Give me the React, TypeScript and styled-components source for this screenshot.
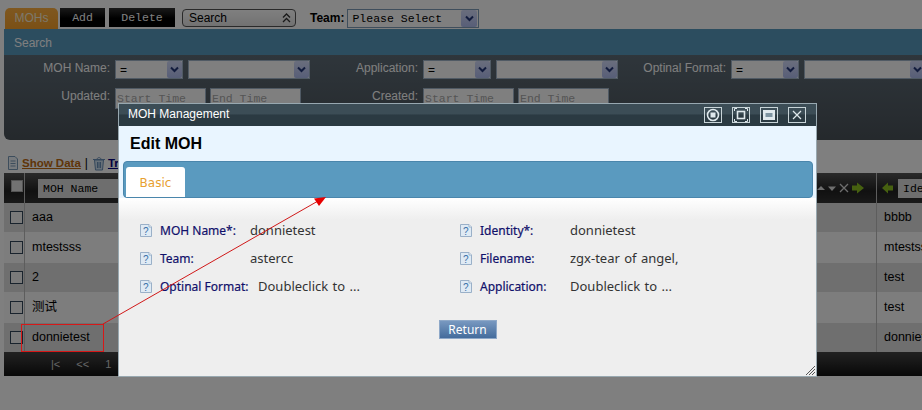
import React from "react";
import styled, { createGlobalStyle } from "styled-components";

const GlobalStyle = createGlobalStyle`
  html, body {
    margin: 0;
    padding: 0;
    width: 922px;
    height: 410px;
    overflow: hidden;
    background: #fff;
    font-family: "Liberation Sans", Arial, "Noto Sans CJK SC", sans-serif;
    font-size: 12px;
  }
  * { box-sizing: border-box; }
`;

const Page = styled.div`
  position: relative;
  width: 922px;
  height: 410px;
  overflow: hidden;
`;
const Dimmer = styled.div`
  position: absolute;
  inset: 0;
  background: rgba(0, 0, 0, 0.5);
`;

/* top toolbar */
const Toolbar = styled.div`
  display: flex;
  align-items: flex-start;
  height: 29px;
  padding: 8px 0 0 5px;
`;
const MainTab = styled.div`
  width: 53px;
  height: 21px;
  margin-right: 2px;
  border-radius: 5px 5px 0 0;
  background: linear-gradient(#ffb040, #f5a02c);
  color: #f8f0d8;
  font-size: 12px;
  line-height: 21px;
  text-align: center;
`;
const BlackButton = styled.div<{ $w: number }>`
  width: ${(p) => p.$w}px;
  height: 19px;
  margin-right: 4px;
  background: linear-gradient(#333 0, #000 55%, #000);
  color: #fff;
  font: 11.5px/19px "Liberation Mono", monospace;
  text-align: center;
`;
const SearchPicker = styled.div`
  display: flex;
  align-items: center;
  justify-content: space-between;
  width: 114px;
  height: 18px;
  margin: 1px 0 0 3px;
  padding: 0 4px 0 6px;
  border: 1px solid #555;
  border-radius: 4px;
  background: linear-gradient(#fff, #e4e4e4);
  color: #000;
`;
const TeamLabel = styled.span`
  margin: 3px 3px 0 14px;
  font-weight: bold;
  color: #000;
`;
const TeamSelect = styled.div`
  display: flex;
  align-items: center;
  justify-content: space-between;
  width: 132px;
  height: 19px;
  margin-top: 1px;
  padding: 0 1px 0 4px;
  border: 1px solid #7f9db9;
  background: #fff;
  font: 11.5px "Liberation Mono", monospace;
`;
const ChevronBox = styled.span<{ $w?: number }>`
  display: flex;
  align-items: center;
  justify-content: center;
  width: ${(p) => p.$w ?? 15}px;
  height: 17px;
  border-radius: 2px;
  background: linear-gradient(#d4dcfa, #b0bdf0);
  color: #24387a;
`;

/* search panel */
const SearchPanel = styled.section`
  margin-left: 4px;
  height: 111px;
  border-radius: 0 0 0 6px;
  background: linear-gradient(#647480, #4a5259);
`;
const SearchHeader = styled.div`
  height: 26px;
  padding-left: 10px;
  background: #589abe;
  color: #fff;
  font-size: 12px;
  line-height: 28px;
`;
const SearchRows = styled.div`
  display: grid;
  grid-template-columns: repeat(3, 308px);
  grid-auto-rows: 28px;
  padding-top: 5px;
`;
const SearchField = styled.div`
  display: flex;
  align-items: flex-start;
  gap: 5px;
  width: 308px;
`;
const FieldLabel = styled.label`
  width: 106px;
  color: #fff;
  line-height: 16px;
  text-align: right;
`;
const FilterSelect = styled.div<{ $w: number }>`
  display: flex;
  align-items: center;
  justify-content: space-between;
  flex: none;
  width: ${(p) => p.$w}px;
  height: 19px;
  padding: 0 0 0 4px;
  border: 1px solid #a0b4c8;
  background: #fff;
  color: #000;
  font: 12px "Liberation Sans", sans-serif;
`;
const TimeInput = styled.div`
  flex: none;
  width: 91px;
  height: 21px;
  margin-right: -1px;
  padding: 3px 1px;
  border: 1px solid #a0b4c8;
  background: #fff;
  color: #aaa;
  font: 11.5px "Liberation Mono", monospace;
`;

/* data grid */
const GridActions = styled.div`
  display: flex;
  align-items: center;
  height: 18px;
  margin-top: 14px;
  margin-bottom: 1px;
  padding-left: 7px;
  font-size: 12px;
`;
const ActionLink = styled.a<{ $c: string }>`
  margin: 0 4px 0 3px;
  color: ${(p) => p.$c};
  font-size: 11.5px;
  font-weight: bold;
  text-decoration: underline;
`;
const TrashIcon = styled.svg`
  margin-left: 4px;
  margin-right: -1px;
`;
const Table = styled.div`
  margin-left: 4px;
`;
const HeadRow = styled.div`
  display: grid;
  grid-template-columns: 21px 852px 1fr;
  height: 30px;
  background: linear-gradient(#555, #222 60%, #333);
`;
const HeadCell = styled.div`
  display: flex;
  align-items: center;
  border-right: 1px solid #bbb;
  padding-left: 13px;
  &:first-child {
    padding-left: 7px;
  }
  &:last-child {
    border-right: 0;
    padding-left: 5px;
    gap: 4px;
  }
`;
const HeadCheck = styled.span`
  width: 12px;
  height: 12px;
  margin-top: -4px;
  background: #e4e4e4;
  border: 1px solid #aaa;
`;
const HeadInput = styled.div`
  width: 130px;
  height: 19px;
  padding-left: 5px;
  background: #ddd;
  color: #000;
  font: 11.5px/19px "Liberation Mono", monospace;
  white-space: nowrap;
  overflow: hidden;
`;
const SortTools = styled.div`
  display: flex;
  align-items: center;
  margin-left: auto;
  margin-right: 11px;
`;
const DataRow = styled.div`
  display: grid;
  grid-template-columns: 21px 852px 1fr;
  height: 29px;
  background: #dedede;
  color: #000;
  font-size: 12.5px;
  line-height: 29px;
  &:nth-child(odd) {
    height: 31px;
    line-height: 31px;
    background: #fafafa;
  }
`;
const DataCell = styled.div`
  padding-left: 7px;
  border-right: 1px solid #bbb;
  overflow: hidden;
  white-space: nowrap;
  &:first-child {
    display: flex;
    align-items: center;
    padding-left: 6px;
  }
  &:last-child {
    border-right: 0;
  }
`;
const RowCheck = styled.span`
  width: 13px;
  height: 13px;
  border: 1px solid #32465a;
  background: #f4f4f4;
`;
const Pager = styled.div`
  display: flex;
  align-items: center;
  gap: 16px;
  height: 24px;
  padding-left: 47px;
  background: linear-gradient(#444, #111);
  color: #ccc;
  font: 11px "Liberation Sans", sans-serif;
`;

/* modal */
const Modal = styled.div`
  position: absolute;
  left: 118px;
  top: 103px;
  display: flex;
  flex-direction: column;
  width: 699px;
  height: 274px;
  border: 1px solid #98a8b0;
  background: #eee;
`;
const TitleBar = styled.div`
  display: flex;
  align-items: center;
  height: 22px;
  padding: 0 10px 0 9px;
  background: linear-gradient(#3c4d56 0, #3c4d56 45%, #2b3a42 50%, #2b3a42);
  color: #fff;
  font-size: 12px;
`;
const TitleText = styled.span`
  flex: 1;
  margin-top: -3px;
`;
const TitleButtons = styled.div`
  display: flex;
  gap: 10px;
`;
const TitleButton = styled.span`
  display: flex;
  align-items: center;
  justify-content: center;
  width: 18px;
  height: 16px;
  border: 1px solid #c8d4d8;
  color: #dfe8ec;
`;
const ModalHead = styled.h2`
  height: 35px;
  margin: 0;
  padding-left: 11px;
  background: #e9f5ff;
  color: #000;
  font-size: 16px;
  font-weight: bold;
  line-height: 35px;
`;
const TabWrap = styled.div`
  background: #e9f5ff;
`;
const TabStrip = styled.div`
  display: flex;
  align-items: flex-end;
  height: 37px;
  margin: 0 3px 0 4px;
  padding-left: 2px;
  border: 1px solid #4a86ac;
  border-radius: 4px;
  background: #5a9abf;
`;
const TabPill = styled.div`
  width: 59px;
  height: 30px;
  border-radius: 3px 3px 0 0;
  background: #fff;
  color: #e8a030;
  font: 12px/32px "DejaVu Sans", sans-serif;
  text-align: center;
`;
const ModalBody = styled.div`
  position: relative;
  flex: 1;
  padding: 18px 0 0 21px;
  background: linear-gradient(#fff 0, #eee 22px);
`;
const DetailGrid = styled.div`
  display: grid;
  grid-template-columns: 320px 1fr;
  grid-auto-rows: 28px;
`;
const Detail = styled.div`
  display: flex;
  align-items: center;
  height: 28px;
`;
const DetailLabel = styled.span<{ $w: number }>`
  width: ${(p) => p.$w}px;
  margin-left: 8px;
  color: #10106a;
  font: 12px "Noto Sans", sans-serif;
  -webkit-text-stroke: 0.2px #10106a;
  white-space: nowrap;
`;
const DetailValue = styled.span`
  color: #333;
  font: 13px "Noto Sans", sans-serif;
  word-spacing: 1px;
  white-space: nowrap;
`;
const ModalFooter = styled.div`
  display: flex;
  justify-content: center;
  margin-top: 20px;
  padding-right: 21px;
`;
const ReturnButton = styled.div`
  width: 58px;
  height: 19px;
  border: 1px solid #8ea8c8;
  background: linear-gradient(#7898c0, #446c9c);
  color: #fff;
  font: 12px/18px "Noto Sans", sans-serif;
  text-align: center;
`;
const Grip = styled.svg`
  position: absolute;
  right: 1px;
  bottom: 1px;
`;

/* red callout drawn on the screenshot */
const CalloutBox = styled.div`
  position: absolute;
  left: 21px;
  top: 324px;
  width: 83px;
  height: 28px;
  border: 1px solid #d81818;
`;
const Annotation = styled.svg`
  position: absolute;
  left: 0;
  top: 0;
`;

function Chevron() {
  return (
    <svg width="9" height="7" viewBox="0 0 9 7">
      <path d="M1 1.5 4.5 5 8 1.5" fill="none" stroke="currentColor" strokeWidth="2" />
    </svg>
  );
}

function HelpIcon() {
  return (
    <svg width="12" height="13" viewBox="0 0 12 13">
      <path d="M.5.5H9L11.5 3V12.5H.5Z" fill="#dfeaf4" stroke="#9ab0c8" />
      <path d="M9 .5V3H11.5" fill="#fff" stroke="#9ab0c8" />
      <text x="3" y="10.5" fontSize="10" fontFamily="Liberation Sans" fill="#3a70a8">?</text>
    </svg>
  );
}

function FilterGroup({ label }: { label: string }) {
  return (
    <SearchField>
      <FieldLabel>{label}</FieldLabel>
      <FilterSelect $w={68}>
        =
        <ChevronBox>
          <Chevron />
        </ChevronBox>
      </FilterSelect>
      <FilterSelect $w={122}>
        <span />
        <ChevronBox>
          <Chevron />
        </ChevronBox>
      </FilterSelect>
    </SearchField>
  );
}

function TimeGroup({ label }: { label: string }) {
  return (
    <SearchField>
      <FieldLabel>{label}</FieldLabel>
      <TimeInput>Start Time</TimeInput>
      <TimeInput>End Time</TimeInput>
    </SearchField>
  );
}

const rows = [
  ["aaa", "bbbb"],
  ["mtestsss", "mtestsss"],
  ["2", "test"],
  ["测试", "test"],
  ["donnietest", "donnietest"],
];

const details = [
  { label: "MOH Name*:", value: "donnietest" },
  { label: "Identity*:", value: "donnietest" },
  { label: "Team:", value: "astercc" },
  { label: "Filename:", value: "zgx-tear of angel," },
  { label: "Optinal Format:", value: "Doubleclick to ...", wide: true },
  { label: "Application:", value: "Doubleclick to ..." },
];

export default function App() {
  return (
    <Page>
      <GlobalStyle />
      <Toolbar>
        <MainTab>MOHs</MainTab>
        <BlackButton $w={45}>Add</BlackButton>
        <BlackButton $w={66}>Delete</BlackButton>
        <SearchPicker>
          Search
          <svg width="9" height="10" viewBox="0 0 9 10">
            <path d="M1 4.5 4.5 1 8 4.5M1 9 4.5 5.5 8 9" fill="none" stroke="#333" strokeWidth="1.3" />
          </svg>
        </SearchPicker>
        <TeamLabel>Team:</TeamLabel>
        <TeamSelect>
          Please Select
          <ChevronBox $w={16}>
            <Chevron />
          </ChevronBox>
        </TeamSelect>
      </Toolbar>

      <SearchPanel>
        <SearchHeader>Search</SearchHeader>
        <SearchRows>
          <FilterGroup label="MOH Name:" />
          <FilterGroup label="Application:" />
          <FilterGroup label="Optinal Format:" />
          <TimeGroup label="Updated:" />
          <TimeGroup label="Created:" />
        </SearchRows>
      </SearchPanel>

      <GridActions>
        <svg width="12" height="14" viewBox="0 0 12 14">
          <path d="M1.5.5H8L10.5 3V13.5H1.5Z" fill="#eef4fa" stroke="#7a9ab8" />
          <path d="M3.5 5H8.5M3.5 7.5H8.5M3.5 10H8.5" stroke="#7a9ab8" />
        </svg>
        <ActionLink $c="#c06a10">Show Data</ActionLink>
        <span>|</span>
        <TrashIcon width="14" height="15" viewBox="0 0 14 15">
          <path d="M2.5 4H11.5L10.5 14H3.5Z" fill="#cfe0f0" stroke="#6a90b8" />
          <path d="M1 3.5H13M5 3.5C5 1 9 1 9 3.5M5.5 6V12M7 6V12M8.5 6V12" fill="none" stroke="#6a90b8" />
        </TrashIcon>
        <ActionLink $c="#000080">Truncate</ActionLink>
      </GridActions>
      <Table>
        <HeadRow>
          <HeadCell>
            <HeadCheck />
          </HeadCell>
          <HeadCell>
            <HeadInput>MOH Name</HeadInput>
            <SortTools>
              <svg width="48" height="12" viewBox="0 0 48 12">
                <path d="M0 8 4 4 8 8Z" fill="#ddd" />
                <path d="M11 4.5H19L15 9Z" fill="#ddd" />
                <path d="M23 2 31 10M31 2 23 10" stroke="#ddd" strokeWidth="1.3" />
                <path d="M35 3.5H40V.5L47 6 40 11.5V8.5H35Z" fill="#8cc020" />
              </svg>
            </SortTools>
          </HeadCell>
          <HeadCell>
            <svg width="12" height="12" viewBox="0 0 12 12">
              <path d="M11 3.5H6V.5L0 6 6 11.5V8.5H11Z" fill="#8cc020" />
            </svg>
            <HeadInput>Identity</HeadInput>
          </HeadCell>
        </HeadRow>
        {rows.map((r) => (
          <DataRow key={r[0]}>
            <DataCell>
              <RowCheck />
            </DataCell>
            <DataCell>{r[0]}</DataCell>
            <DataCell>{r[1]}</DataCell>
          </DataRow>
        ))}
        <Pager>
          <span>|&lt;</span>
          <span>&lt;&lt;</span>
          <span>1</span>
        </Pager>
      </Table>
      <Dimmer />

      <Modal>
        <TitleBar>
          <TitleText>MOH Management</TitleText>
          <TitleButtons>
            <TitleButton>
              <svg width="14" height="14" viewBox="0 0 14 14">
                <circle cx="7" cy="7" r="5.5" fill="none" stroke="currentColor" strokeWidth="1.6" />
                <rect x="4.5" y="4.5" width="5" height="5" fill="currentColor" />
              </svg>
            </TitleButton>
            <TitleButton>
              <svg width="14" height="14" viewBox="0 0 14 14">
                <rect x="3.5" y="3.5" width="7" height="7" fill="none" stroke="currentColor" strokeWidth="1.6" />
                <path d="M.5 3V.5H3M11 .5H13.5V3M13.5 11V13.5H11M3 13.5H.5V11" fill="none" stroke="currentColor" />
              </svg>
            </TitleButton>
            <TitleButton>
              <svg width="14" height="12" viewBox="0 0 14 12">
                <rect x="1" y="1" width="12" height="10" fill="currentColor" />
                <rect x="3.5" y="4" width="7" height="4" fill="#7d93a0" />
              </svg>
            </TitleButton>
            <TitleButton>
              <svg width="10" height="10" viewBox="0 0 10 10">
                <path d="M1 1 9 9M9 1 1 9" stroke="currentColor" strokeWidth="1.2" />
              </svg>
            </TitleButton>
          </TitleButtons>
        </TitleBar>
        <ModalHead>Edit MOH</ModalHead>
        <TabWrap>
          <TabStrip>
            <TabPill>Basic</TabPill>
          </TabStrip>
        </TabWrap>
        <ModalBody>
          <DetailGrid>
            {details.map((d) => (
              <Detail key={d.label}>
                <HelpIcon />
                <DetailLabel $w={d.wide ? 98 : 90}>{d.label}</DetailLabel>
                <DetailValue>{d.value}</DetailValue>
              </Detail>
            ))}
          </DetailGrid>
          <ModalFooter>
            <ReturnButton>Return</ReturnButton>
          </ModalFooter>
          <Grip width="9" height="9" viewBox="0 0 9 9">
            <path d="M0 9 9 0M3 9 9 3M6 9 9 6" stroke="#555" strokeWidth="1" />
          </Grip>
        </ModalBody>
      </Modal>

      <CalloutBox />
      <Annotation width="922" height="410" viewBox="0 0 922 410">
        <path d="M103 324 318 201" fill="none" stroke="#d01818" />
        <path d="M326 197 314 198.5 319 206Z" fill="#e80000" />
      </Annotation>
    </Page>
  );
}
